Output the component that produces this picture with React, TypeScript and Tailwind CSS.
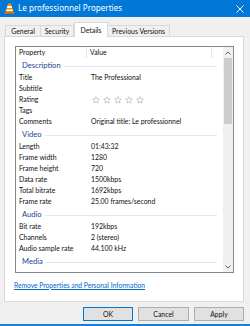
import React from 'react';

type Row = { label: string; value?: string; stars?: boolean };
type Group = { title: string; rows: Row[] };

const groups: Group[] = [
  {
    title: 'Description',
    rows: [
      { label: 'Title', value: 'The Professional' },
      { label: 'Subtitle' },
      { label: 'Rating', stars: true },
      { label: 'Tags' },
      { label: 'Comments', value: 'Original title: Le professionnel' },
    ],
  },
  {
    title: 'Video',
    rows: [
      { label: 'Length', value: '01:43:32' },
      { label: 'Frame width', value: '1280' },
      { label: 'Frame height', value: '720' },
      { label: 'Data rate', value: '1500kbps' },
      { label: 'Total bitrate', value: '1692kbps' },
      { label: 'Frame rate', value: '25.00 frames/second' },
    ],
  },
  {
    title: 'Audio',
    rows: [
      { label: 'Bit rate', value: '192kbps' },
      { label: 'Channels', value: '2 (stereo)' },
      { label: 'Audio sample rate', value: '44.100 kHz' },
    ],
  },
  { title: 'Media', rows: [] },
];

function VlcIcon() {
  return (
    <svg width="11" height="11" viewBox="0 0 22 22">
      <polygon points="8,1 14,1 19,18 3,18" fill="#f08c00" />
      <polygon points="7,6 15,6 16.4,10 5.6,10" fill="#ffffff" />
      <polygon points="4.8,13 17.2,13 18.2,16 3.8,16" fill="#ffffff" />
      <rect x="1" y="18" width="20" height="3.5" rx="1" fill="#e06f00" />
    </svg>
  );
}

function Star() {
  return (
    <svg width="8" height="8" viewBox="0 0 24 24">
      <polygon
        points="12,2 14.9,8.6 22,9.3 16.6,14 18.2,21 12,17.3 5.8,21 7.4,14 2,9.3 9.1,8.6"
        fill="none"
        stroke="#a8a8a8"
        strokeWidth="1.8"
        strokeLinejoin="round"
      />
    </svg>
  );
}

export default function App() {
  const tabs = ['General', 'Security', 'Details', 'Previous Versions'];

  return (
    <div
      className="w-[250px] h-[326px] bg-[#f0f0f0] flex flex-col border-b-2 border-[#1a7fd4] overflow-hidden text-[6.9px] text-[#111]"
      style={{ fontFamily: 'Lato, "Noto Sans", sans-serif' }}
    >
      {/* title bar */}
      <div className="h-[17px] bg-[#0078d7] flex items-center pl-[4px] pr-[6px] shrink-0">
        <VlcIcon />
        <span className="ml-[3px] text-white text-[8.1px] leading-none font-['Noto_Sans',sans-serif]">
          Le professionnel Properties
        </span>
        <svg className="ml-auto" width="8" height="8" viewBox="0 0 8 8">
          <path d="M0.5 0.5 L7.5 7.5 M7.5 0.5 L0.5 7.5" stroke="#ffffff" strokeWidth="0.9" />
        </svg>
      </div>

      {/* tabs */}
      <div className="mt-[5px] pl-[5px] h-[14px] flex items-end shrink-0 relative z-10">
        {tabs.map((t) =>
          t === 'Details' ? (
            <div
              key={t}
              className="h-[15px] -mb-px w-[34px] justify-center bg-white border border-b-0 border-[#d9d9d9] flex items-center leading-none"
            >
              {t}
            </div>
          ) : (
            <div
              key={t}
              className={`h-[11px] justify-center bg-[#f0f0f0] border border-b-0 border-[#d9d9d9] -ml-px first:ml-0 flex items-center leading-none ${
                t === 'General' ? 'w-[36px]' : t === 'Security' ? 'w-[34px]' : 'w-[63px]'
              }`}
            >
              {t}
            </div>
          )
        )}
      </div>

      {/* panel */}
      <div className="ml-[4px] w-[240px] h-[266px] bg-white border border-[#d9d9d9] pt-[9px] pl-[10px] shrink-0">
        <div className="w-[219px] h-[227px] border border-[#828790] flex">
          <div className="flex-1 flex flex-col overflow-hidden">
            {/* header */}
            <div className="h-[11px] flex items-center shrink-0 leading-none">
              <div className="w-[71px] h-full border-r border-[#e5e5e5] pl-[3px] flex items-center">Property</div>
              <div className="w-[125px] h-full border-r border-[#e5e5e5] pl-[3px] flex items-center">Value</div>
            </div>
            {groups.map((g) => (
              <div key={g.title}>
                <div className="h-[14px] flex items-center pt-[2px] pl-[6px] pr-[6px]">
                  <span className="text-[#1e3f93] text-[7.6px] leading-none">{g.title}</span>
                  <div className="flex-1 ml-[3px] h-px bg-[#e3e7ee]" />
                </div>
                {g.rows.map((r) => (
                  <div key={r.label} className="h-[11px] flex items-center leading-none">
                    <div className="w-[75px] pl-[3px] whitespace-nowrap">{r.label}</div>
                    {r.stars ? (
                      <div className="flex gap-[3px] pl-[1px]">
                        <Star />
                        <Star />
                        <Star />
                        <Star />
                        <Star />
                      </div>
                    ) : (
                      <div className="whitespace-nowrap">{r.value}</div>
                    )}
                  </div>
                ))}
              </div>
            ))}
          </div>
          {/* scrollbar */}
          <div className="w-[10px] bg-[#f0f0f0] flex flex-col shrink-0">
            <div className="h-[11px] flex items-center justify-center">
              <svg width="6" height="4" viewBox="0 0 6 4">
                <path d="M0.5 3.5 L3 1 L5.5 3.5" fill="none" stroke="#606060" strokeWidth="1" />
              </svg>
            </div>
            <div className="mx-[1px] h-[66px] bg-[#cdcdcd]" />
            <div className="flex-1" />
            <div className="h-[11px] flex items-center justify-center">
              <svg width="6" height="4" viewBox="0 0 6 4">
                <path d="M0.5 0.5 L3 3 L5.5 0.5" fill="none" stroke="#606060" strokeWidth="1" />
              </svg>
            </div>
          </div>
        </div>
        <div className="mt-[7px] h-[10px] flex items-center">
          <span className="text-[#0066cc] underline leading-none -ml-px text-[6.7px]">
            Remove Properties and Personal Information
          </span>
        </div>
      </div>

      {/* buttons */}
      <div className="mt-[5px] flex justify-end gap-[5px] pr-[6px] shrink-0">
        <button className="w-[50px] h-[14px] bg-[#e1e1e1] border border-[#0078d7] leading-none">OK</button>
        <button className="w-[51px] h-[14px] bg-[#e1e1e1] border border-[#adadad] leading-none">Cancel</button>
        <button className="w-[50px] h-[14px] bg-[#e1e1e1] border border-[#adadad] leading-none">Apply</button>
      </div>
    </div>
  );
}
